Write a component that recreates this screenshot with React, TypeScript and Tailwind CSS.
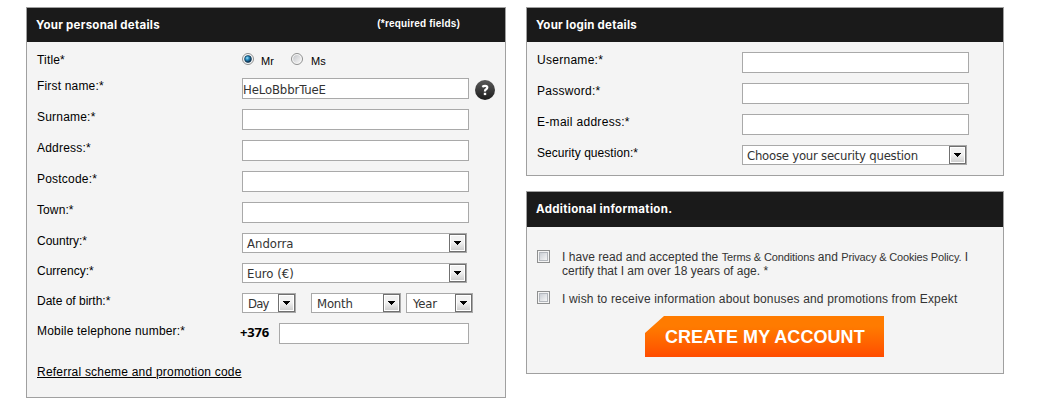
import type { ReactNode } from "react";

const TAHOMA = "font-['DejaVu_Sans_Condensed','DejaVu_Sans',sans-serif] [font-stretch:condensed]";

function Label({ text, spacing = "" }: { text: string; spacing?: string }) {
  return (
    <label className={`w-[205px] shrink-0 text-[12px] leading-[16px] whitespace-nowrap text-black ${spacing}`}>{text}</label>
  );
}

function TextField({ value = "", width = "w-[227px]", type = "text" }: { value?: string; width?: string; type?: string }) {
  return (
    <input
      type={type}
      defaultValue={value}
      className={`block h-[21px] shrink-0 rounded-none border border-[#a9a9a9] bg-white pt-[2px] text-[13px] leading-[16px] tracking-[-0.12px] text-[#333] outline-none ${width} ${TAHOMA}`}
    />
  );
}

function Picker({ text, width = "w-[225px]", pad = "pl-[4px]", spacing = "" }: { text: string; width?: string; pad?: string; spacing?: string }) {
  return (
    <div className={`flex h-[20px] shrink-0 justify-between border border-[#a9a9a9] bg-white ${width}`}>
      <span className={`pt-[2px] text-[13px] leading-[16px] whitespace-nowrap text-[#333] ${pad} ${spacing} ${TAHOMA}`}>{text}</span>
      <button className="flex h-[18px] w-[17px] shrink-0 items-center justify-center border border-[#707070] bg-white p-px">
        <span className="flex h-full w-full items-center justify-center bg-linear-to-b from-[#f2f2f2] from-45% to-[#cfcfcf] to-100%">
          <svg width="7" height="4" viewBox="0 0 7 4" shapeRendering="crispEdges">
            <path d="M0 0h7v1H6v1H5v1H4v1H3V3H2V2H1V1H0z" fill="#000" />
          </svg>
        </span>
      </button>
    </div>
  );
}

function Radio({ on = false }: { on?: boolean }) {
  return (
    <svg width="12" height="12" viewBox="0 0 12 12" className="shrink-0">
      <defs>
        <radialGradient id="dot" cx="0.38" cy="0.35" r="0.65">
          <stop offset="0" stopColor="#9be0fa" />
          <stop offset="0.45" stopColor="#2488bd" />
          <stop offset="1" stopColor="#0a2c4a" />
        </radialGradient>
        <linearGradient id="off" x1="0" y1="0" x2="1" y2="1">
          <stop offset="0" stopColor="#c4c6ca" />
          <stop offset="1" stopColor="#f6f6f6" />
        </linearGradient>
      </defs>
      <circle cx="6" cy="6" r="5.5" fill="#f8f8f8" stroke="#8e8f8f" />
      <circle cx="6" cy="6" r="3.9" fill={on ? "#d5e5ee" : "url(#off)"} />
      {on && <circle cx="6" cy="6" r="3.4" fill="url(#dot)" stroke="#16374f" strokeWidth="0.7" />}
    </svg>
  );
}

function Checkbox() {
  return (
    <span className="block h-[13px] w-[13px] shrink-0 border border-[#8e8f8f] bg-[#f4f4f4] p-px">
      <span className="block h-full w-full border border-[#b3b7bd] bg-linear-to-br from-[#cbcfd5] to-[#f6f6f6]" />
    </span>
  );
}

function HelpIcon() {
  return (
    <svg width="20" height="20" viewBox="0 0 20 20" className="mt-[2px] ml-[6px] shrink-0">
      <defs>
        <linearGradient id="help" x1="0" y1="0" x2="0" y2="1">
          <stop offset="0" stopColor="#5a5a5a" />
          <stop offset="1" stopColor="#1c1c1c" />
        </linearGradient>
      </defs>
      <circle cx="10" cy="10" r="10" fill="url(#help)" />
      <path d="M7.3 6.8Q8.5 5.8 10.1 5.8Q12.3 5.8 12.3 7.5Q12.3 8.5 11.1 9.3Q9.9 10 9.9 11.4" fill="none" stroke="#fff" strokeWidth="2.2" />
      <rect x="8.8" y="12.8" width="2.4" height="2.3" fill="#fff" />
    </svg>
  );
}

function Panel({ title, spacing, note, className, headerHeight = "h-[34px]", children }: { title: string; spacing: string; note?: ReactNode; className: string; headerHeight?: string; children: ReactNode }) {
  return (
    <section className={`shrink-0 border border-[#a0a0a0] bg-[#f4f4f4] ${className}`}>
      <header className={`flex justify-between bg-[#1a1a1a] pl-[9px] text-white ${headerHeight}`}>
        <h2 className={`font-['Inter',sans-serif] text-[11.5px] leading-[34px] font-bold whitespace-nowrap ${spacing}`}>{title}</h2>
        {note}
      </header>
      {children}
    </section>
  );
}

function Row({ children, height = "h-[31px]" }: { children: ReactNode; height?: string }) {
  return <div className={`flex items-start ${height}`}>{children}</div>;
}

export default function App() {
  return (
    <main className="flex h-[409px] w-[1049px] gap-[20px] overflow-hidden bg-white pt-[7px] pl-[26px] font-['Liberation_Sans',Arial,sans-serif]">
      <Panel
        title="Your personal details"
        spacing="tracking-[0.26px]"
        className="h-[391px] w-[480px]"
        note={<span className="pr-[45px] text-[10px] leading-[31px] font-bold tracking-[0.18px] whitespace-nowrap">(*required fields)</span>}
      >
        <div className="pt-[10px] pl-[10px]">
          <Row height="h-[26px]">
            <Label text="Title*" spacing="tracking-[0.17px]" />
            <div className="flex pt-px text-[11px] leading-[16px] text-black">
              <Radio on />
              <span className="w-[37px] pl-[7px]">Mr</span>
              <Radio />
              <span className="pl-[8px]">Ms</span>
            </div>
          </Row>
          <Row>
            <Label text="First name:*" spacing="tracking-[0.18px]" />
            <TextField value="HeLoBbbrTueE" />
            <HelpIcon />
          </Row>
          <Row><Label text="Surname:*" spacing="tracking-[0.2px]" /><TextField /></Row>
          <Row><Label text="Address:*" spacing="tracking-[0.2px]" /><TextField /></Row>
          <Row><Label text="Postcode:*" spacing="tracking-[0.2px]" /><TextField /></Row>
          <Row><Label text="Town:*" spacing="tracking-[0.1px]" /><TextField /></Row>
          <Row height="h-[30px]"><Label text="Country:*" /><Picker text="Andorra" /></Row>
          <Row height="h-[30px]"><Label text="Currency:*" /><Picker text="Euro (€)" /></Row>
          <Row height="h-[30px]">
            <Label text="Date of birth:*" />
            <div className="flex">
              <Picker text="Day" width="w-[54px]" pad="pl-[5px]" spacing="tracking-[-0.8px]" />
              <div className="ml-[15px] flex gap-[5px]">
                <Picker text="Month" width="w-[90px]" pad="pl-[5px]" spacing="tracking-[-0.2px]" />
                <Picker text="Year" width="w-[67px]" pad="pl-[6px]" spacing="tracking-[-0.2px]" />
              </div>
            </div>
          </Row>
          <Row height="h-[41px]">
            <Label text="Mobile telephone number:*" spacing="tracking-[0.19px]" />
            <span className="-ml-[2px] w-[39px] shrink-0 pt-px font-['Open_Sans',sans-serif] text-[13px] leading-[16px] font-bold tracking-[-0.2px] text-black">+376</span>
            <TextField width="w-[190px]" />
          </Row>
          <a className="block text-[12px] leading-[16px] tracking-[0.21px] whitespace-nowrap text-black underline">Referral scheme and promotion code</a>
        </div>
      </Panel>

      <div className="flex flex-col gap-[15px]">
        <Panel title="Your login details" spacing="tracking-[0.22px]" className="h-[169px] w-[478px]">
          <div className="pt-[10px] pl-[10px]">
            <Row><Label text="Username:*" spacing="tracking-[0.28px]" /><TextField /></Row>
            <Row><Label text="Password:*" spacing="tracking-[0.28px]" /><TextField type="password" /></Row>
            <Row><Label text="E-mail address:*" spacing="tracking-[0.3px]" /><TextField /></Row>
            <Row><Label text="Security question:*" spacing="tracking-[0.05px]" /><Picker text="Choose your security question" spacing="tracking-[-0.24px]" /></Row>
          </div>
        </Panel>

        <Panel title="Additional information." spacing="tracking-[0.32px]" headerHeight="h-[35px]" className="h-[183px] w-[478px]">
          <div className="flex flex-col pt-[23px] pl-[10px] text-[12px] leading-[14px] whitespace-nowrap text-[#333]">
            <div className="flex h-[41px] gap-[12px]">
              <Checkbox />
              <p>
                <span className="tracking-[0.03px]">I have read and accepted the </span>
                <span className="text-[11px] tracking-[-0.14px]">Terms &amp; Conditions</span> and{" "}
                <span className="text-[11px] tracking-[-0.15px]">Privacy &amp; Cookies Policy.</span> I
                <br />
                certify that I am over 18 years of age. *
              </p>
            </div>
            <div className="flex h-[25px] gap-[12px]">
              <Checkbox />
              <p className="pt-px tracking-[0.16px]">I wish to receive information about bonuses and promotions from Expekt</p>
            </div>
            <button className="ml-[108px] flex h-[41px] w-[239px] items-center pl-[20px] text-[18px] font-bold tracking-[0.06px] text-white bg-linear-to-b from-[#ff7b00] from-25% to-[#ff4b00] [clip-path:polygon(19px_0,100%_0,100%_100%,0_100%,0_17px)]">
              CREATE MY ACCOUNT
            </button>
          </div>
        </Panel>
      </div>
    </main>
  );
}
